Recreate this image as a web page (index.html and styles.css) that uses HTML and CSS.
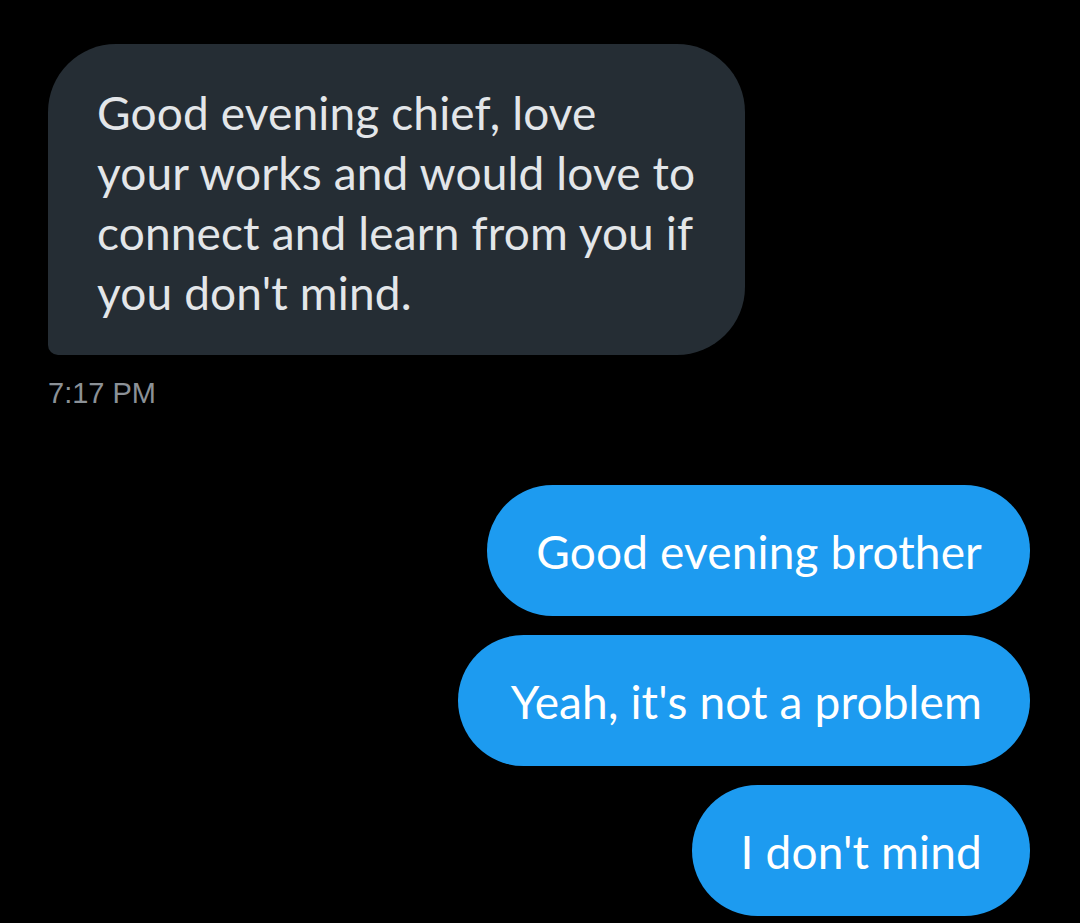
FILE: index.html
```html
<!DOCTYPE html>
<html>
<head>
<meta charset="utf-8">
<link rel="stylesheet" href="styles.css">
</head>
<body>
<div class="chat">
  <div class="incoming">
    <div class="bubble gray">Good evening chief, love<br>your works and would love to<br>connect and learn from you if<br>you don't mind.</div>
    <div class="time">7:17 PM</div>
  </div>
  <div class="outgoing">
    <div class="bubble blue">Good evening brother</div>
    <div class="bubble blue">Yeah, it's not a problem</div>
    <div class="bubble blue">I don't mind</div>
  </div>
</div>
</body>
</html>
```

FILE: styles.css
```css
html, body {
  margin: 0;
  padding: 0;
  background: #000;
}
body {
  width: 1080px;
  height: 923px;
  overflow: hidden;
  font-family: "Lato", "Noto Sans", sans-serif;
}
.chat {
  padding: 44px 50px 0 48px;
  display: flex;
  flex-direction: column;
}
.incoming {
  display: flex;
  flex-direction: column;
  align-items: flex-start;
}
.bubble {
  font-size: 46px;
  line-height: 60px;
  letter-spacing: 0.15px;
  box-sizing: border-box;
}
.gray {
  width: 697px;
  background: #252d34;
  color: #e3e6e9;
  padding: 39px 30px 32px 49px;
  border-radius: 68px 68px 68px 10px;
}
.time {
  margin-top: 21px;
  font-family: "Liberation Sans", Arial, sans-serif;
  font-size: 29px;
  line-height: 34px;
  color: #8b9197;
}
.outgoing {
  margin-top: 75px;
  display: flex;
  flex-direction: column;
  align-items: flex-end;
  gap: 19px;
}
.blue {
  background: #1d9bf0;
  color: #fff;
  height: 131px;
  padding: 37px 48px 0 49px;
  border-radius: 66px;
  white-space: nowrap;
}
.blue:nth-child(2) {
  padding-left: 53px;
}
```
